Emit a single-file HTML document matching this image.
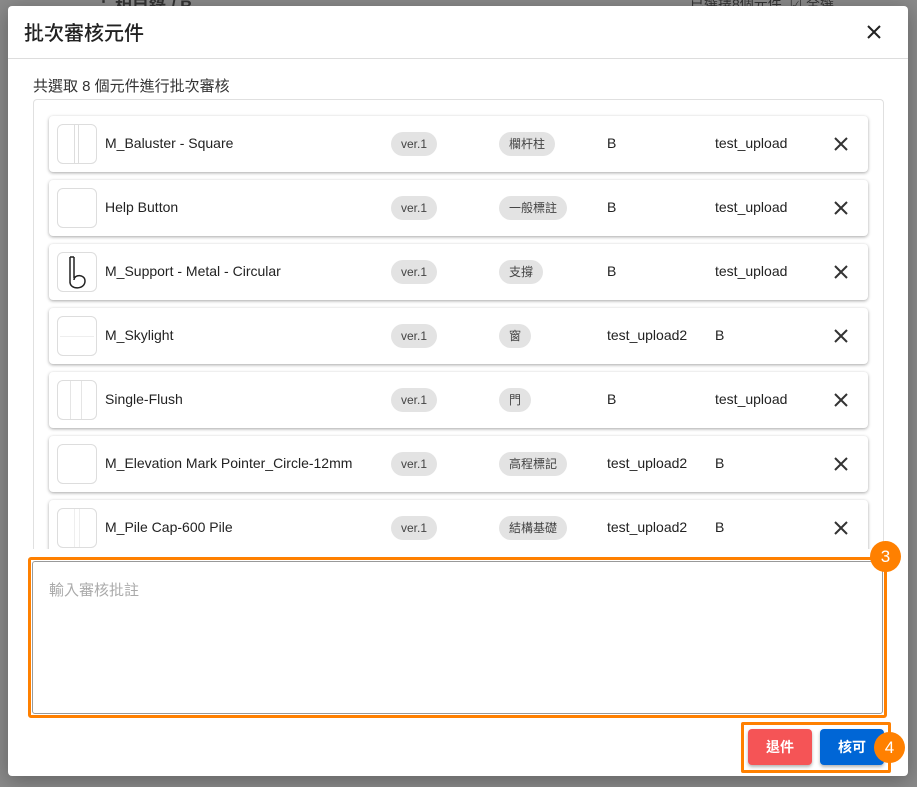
<!DOCTYPE html>
<html><head><meta charset="utf-8"><style>
*{box-sizing:border-box;margin:0;padding:0}
body{width:917px;height:787px;overflow:hidden;background:#8a8a8a;font-family:"Liberation Sans","Noto Sans CJK TC",sans-serif;position:relative}
.bgtxt{position:absolute;top:-8px;font-size:17px;color:#333}
.modal{position:absolute;left:8px;top:6px;width:900px;height:770px;background:#fff;border-radius:4px;box-shadow:0 4px 20px rgba(0,0,0,.3)}
.title{position:absolute;left:16px;top:11px;font-size:20px;color:#222;font-weight:500}
.close{position:absolute;left:858px;top:18px}
.hr{position:absolute;left:0;right:0;top:52px;border-top:1px solid #ddd}
.sub{position:absolute;left:25px;top:69px;font-size:15px;color:#333}
.list{position:absolute;left:25px;top:93px;width:851px;height:450px;border:1px solid #e0e0e0;border-bottom:none;border-radius:4px 4px 0 0;overflow:hidden}
.card{position:absolute;left:15px;width:819px;height:56px;background:#fff;border-radius:4px;box-shadow:0 1px 3px rgba(0,0,0,.35)}
.th{position:absolute;left:8px;top:8px;width:40px;height:40px;border:1px solid #ddd;border-radius:6px}
.nm{position:absolute;left:56px;top:19px;font-size:14px;color:#222}
.pill{position:absolute;top:16px;height:24px;line-height:24px;background:#e3e3e3;border-radius:12px;font-size:12px;color:#444;padding:0 10px}
.c4{position:absolute;left:558px;top:19px;font-size:14px;color:#222}
.c5{position:absolute;left:666px;top:19px;font-size:14px;color:#222}
.x{position:absolute;left:785px;top:21px}
.box3{position:absolute;left:28px;top:557px;width:859px;height:161px;border:3px solid #ff8000;border-radius:3px}
.ta{position:absolute;left:1px;top:1px;right:1px;bottom:1px;border:1px solid #999;border-radius:3px;background:#fff}
.ph{position:absolute;left:16px;top:17px;font-size:15px;color:#aaa}
.badge{position:absolute;width:31px;height:31px;border-radius:50%;background:#ff8000;color:#fff;font-size:17px;text-align:center;line-height:31px}
.box4{position:absolute;left:741px;top:722px;width:150px;height:51px;border:3px solid #ff8000;border-radius:2px}
.btn{position:absolute;top:729px;width:64px;height:36px;border-radius:4px;color:#fff;font-size:14px;font-weight:bold;text-align:center;line-height:36px;box-shadow:0 2px 3px rgba(0,0,0,.3)}
</style></head><body>
<div class="bgtxt" style="left:95px;font-weight:bold">⋮</div>
<div class="bgtxt" style="left:115px;font-weight:bold">相目錄 / B</div>
<div class="bgtxt" style="left:690px;font-size:14px;top:-6px">已選擇8個元件 &nbsp;☑ 全選</div>
<div class="modal">
<div class="title">批次審核元件</div>
<svg class="close" width="16" height="16" viewBox="0 0 16 16"><path d="M2 2L14 14M14 2L2 14" stroke="#222" stroke-width="2"/></svg>
<div class="hr"></div>
<div class="sub">共選取 8 個元件進行批次審核</div>
<div class="list">
<div class="card" style="top:16px"><div class="th"><div style="position:absolute;left:16px;top:0;width:5px;height:38px;border-left:1px solid #ddd;border-right:1px solid #ddd"></div></div><div class="nm">M_Baluster - Square</div><div class="pill" style="left:342px">ver.1</div><div class="pill" style="left:450px">欄杆柱</div><div class="c4">B</div><div class="c5">test_upload</div><svg class="x" width="14" height="14"><path d="M1 1L13 13M13 1L1 13" stroke="#333" stroke-width="2"/></svg></div>
<div class="card" style="top:80px"><div class="th"></div><div class="nm">Help Button</div><div class="pill" style="left:342px">ver.1</div><div class="pill" style="left:450px">一般標註</div><div class="c4">B</div><div class="c5">test_upload</div><svg class="x" width="14" height="14"><path d="M1 1L13 13M13 1L1 13" stroke="#333" stroke-width="2"/></svg></div>
<div class="card" style="top:144px"><div class="th"><svg width="40" height="40" style="position:absolute;left:-1px;top:-1px"><path d="M13 5V31M17 5V26M13 5H17M13 30C13 38 28 38 28 29C28 22 17 22 17 28" stroke="#222" stroke-width="1.5" fill="none"/></svg></div><div class="nm">M_Support - Metal - Circular</div><div class="pill" style="left:342px">ver.1</div><div class="pill" style="left:450px">支撐</div><div class="c4">B</div><div class="c5">test_upload</div><svg class="x" width="14" height="14"><path d="M1 1L13 13M13 1L1 13" stroke="#333" stroke-width="2"/></svg></div>
<div class="card" style="top:208px"><div class="th"><div style="position:absolute;left:2px;top:19px;width:34px;border-top:1px solid #eee"></div></div><div class="nm">M_Skylight</div><div class="pill" style="left:342px">ver.1</div><div class="pill" style="left:450px">窗</div><div class="c4">test_upload2</div><div class="c5">B</div><svg class="x" width="14" height="14"><path d="M1 1L13 13M13 1L1 13" stroke="#333" stroke-width="2"/></svg></div>
<div class="card" style="top:272px"><div class="th"><div style="position:absolute;left:12px;top:0;width:12px;height:38px;border-left:1px solid #e5e5e5;border-right:1px solid #e5e5e5"></div></div><div class="nm">Single-Flush</div><div class="pill" style="left:342px">ver.1</div><div class="pill" style="left:450px">門</div><div class="c4">B</div><div class="c5">test_upload</div><svg class="x" width="14" height="14"><path d="M1 1L13 13M13 1L1 13" stroke="#333" stroke-width="2"/></svg></div>
<div class="card" style="top:336px"><div class="th"></div><div class="nm">M_Elevation Mark Pointer_Circle-12mm</div><div class="pill" style="left:342px">ver.1</div><div class="pill" style="left:450px">高程標記</div><div class="c4">test_upload2</div><div class="c5">B</div><svg class="x" width="14" height="14"><path d="M1 1L13 13M13 1L1 13" stroke="#333" stroke-width="2"/></svg></div>
<div class="card" style="top:400px"><div class="th"><div style="position:absolute;left:16px;top:0;width:6px;height:38px;border-left:1px solid #eee;border-right:1px solid #eee"></div></div><div class="nm">M_Pile Cap-600 Pile</div><div class="pill" style="left:342px">ver.1</div><div class="pill" style="left:450px">結構基礎</div><div class="c4">test_upload2</div><div class="c5">B</div><svg class="x" width="14" height="14"><path d="M1 1L13 13M13 1L1 13" stroke="#333" stroke-width="2"/></svg></div>
</div>
</div>
<div class="box3"><div class="ta"><div class="ph">輸入審核批註</div></div></div>
<div class="badge" style="left:870px;top:541px">3</div>
<div class="box4"></div>
<div class="btn" style="left:748px;background:#f55456">退件</div>
<div class="btn" style="left:820px;background:#0066d6">核可</div>
<div class="badge" style="left:874px;top:732px">4</div>
</body></html>
